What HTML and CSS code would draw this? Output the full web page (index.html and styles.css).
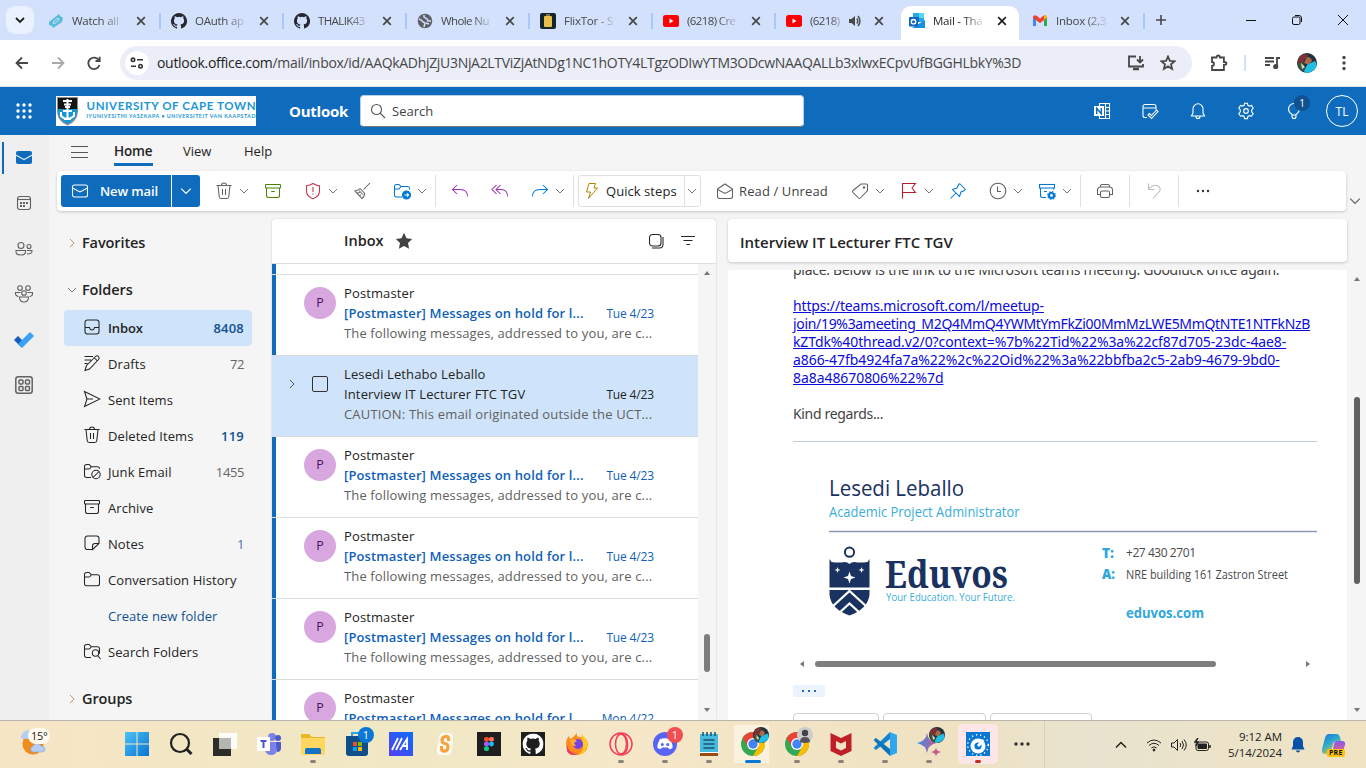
FILE: index.html
```html
<!DOCTYPE html>
<html lang="en">
<head>
<meta charset="utf-8">
<title>Mail - Outlook</title>
<link rel="stylesheet" href="styles.css">
</head>
<body>
<svg class="defs" aria-hidden="true">
  <symbol id="x" viewBox="0 0 10 10"><path d="M1.2 1.2l7.6 7.6M8.800 1.200l-7.600 7.600"/></symbol>
  <symbol id="down" viewBox="0 0 10 10"><path d="M1 3l4 4 4-4"/></symbol>
  <symbol id="right" viewBox="0 0 10 10"><path d="M3 1l4 4-4 4"/></symbol>
  <symbol id="github" viewBox="0 0 16 16"><path d="M8 0a8 8 0 0 0-2.530 15.590c.4.070.550-.170.550-.380v-1.490c-2.010.370-2.530-.490-2.690-.940-.090-.230-.480-.940-.820-1.130-.280-.150-.680-.520-.010-.530.630-.010 1.080.580 1.230.820.720 1.210 1.870.870 2.330.660.070-.520.280-.870.510-1.070-1.780-.2-3.640-.890-3.640-3.950 0-.870.310-1.590.820-2.150-.080-.2-.360-1.020.080-2.120 0 0 .670-.210 2.200.820a7.600 7.600 0 0 1 4 0c1.530-1.040 2.200-.820 2.200-.820.440 1.100.160 1.920.080 2.120.510.560.820 1.270.820 2.150 0 3.070-1.870 3.750-3.650 3.950.290.250.540.730.540 1.480v2.200c0 .210.150.460.550.380A8 8 0 0 0 8 0z"/></symbol>
  <symbol id="yt" viewBox="0 0 16 16"><rect y="2" width="16" height="12" rx="2.500" fill="#f00"/><path d="M6.500 5.500v5l4-2.500z" fill="#fff"/></symbol>
  <symbol id="mail" viewBox="0 0 18 18"><rect x="1.500" y="3" width="15" height="12" rx="2"/><path d="M1.500 6L9 10l7.500-4"/></symbol>
  <symbol id="trash" viewBox="0 0 18 18"><path d="M1.500 3.500h15M6.500 3.500a2.500 2.500 0 0 1 5 0M3 3.500l1.200 11q.2 2 2 2h5.600q1.800 0 2-2l1.200-11M7.500 7v6M10.500 7v6"/></symbol>
  <symbol id="archive" viewBox="0 0 18 18"><rect x="1.500" y="2.500" width="15" height="3.500" rx=".8"/><path d="M2.500 6v7.500a2 2 0 0 0 2 2h9a2 2 0 0 0 2-2V6M7.200 9.500h3.600"/></symbol>
  <symbol id="folder" viewBox="0 0 18 18"><path d="M1.500 13.500v-9a2 2 0 0 1 2-2h2.600l2.200 2.200h6.200a2 2 0 0 1 2 2v7a2 2 0 0 1-2 2h-11a2 2 0 0 1-2-2zM1.500 7h4.300q.8 0 1.400-.8l1.100-1.500"/></symbol>
  <symbol id="reply" viewBox="0 0 18 18"><path d="M6 3L1.500 7.500 6 12M1.500 7.500H9q7.500 0 7.500 7"/></symbol>
  <symbol id="chrome" viewBox="0 0 24 24"><circle cx="12" cy="12" r="12" fill="#34a853"/><path d="M1.600 6A12 12 0 0 1 22.400 6H12z" fill="#ea4335"/><path d="M22.400 6A12 12 0 0 1 12 24l5.200-9L12 6z" fill="#fbbc04"/><path d="M1.600 6L7 15l5-9z" fill="#ea4335"/><circle cx="12" cy="12" r="6" fill="#fff"/><circle cx="12" cy="12" r="4.700" fill="#4285f4"/></symbol>
  <symbol id="face" viewBox="0 0 20 20"><circle cx="10" cy="10" r="10" fill="#24303a"/><path d="M3 3Q7 0 11 2l-5 8-5 2Q0 7 3 3z" fill="#7b3136"/><path d="M10 4q4 0 5 4l-3 4-5-2z" fill="#a86a4c"/><path d="M1 11l5-2 2 6-2 4q-4-2-5-8z" fill="#3a5943"/><path d="M10 12l8-4q3 4 0 8-4 4-9 4-3-1-1-4z" fill="#22bfe5"/><path d="M4 10l4 4-3 2z" fill="#d9d5bc"/></symbol>
</svg>

<header class="tabs">
  <div class="tab-search"><svg class="s2" width="10" height="10"><use href="#down"/></svg></div>
  <div class="tab"><svg width="16" height="16"><path d="M1 9l10-8 1 2 3 2-1 4-9 6-1-2-3-1z" fill="#58bcd9"/><path d="M5 9l5-4 1 2-5 4z" stroke="#d3e1fd" fill="#58bcd9"/></svg><span>Watch all</span><svg class="close"><use href="#x"/></svg></div>
  <div class="tab"><svg width="16" height="16" fill="#24292f"><use href="#github"/></svg><span>OAuth ap</span><svg class="close"><use href="#x"/></svg></div>
  <div class="tab"><svg width="16" height="16" fill="#24292f"><use href="#github"/></svg><span class="tight">THALIK43</span><svg class="close"><use href="#x"/></svg></div>
  <div class="tab"><svg width="16" height="16"><circle cx="8" cy="8" r="7.300" fill="#5f6368"/><path d="M2 6q3 1 4 3l2 1-1 4M7 2v2l3 2 1 2h3M9 10l3 1" stroke="#d3e1fd" stroke-width="1.500" fill="none"/></svg><span class="tight">Whole Nu</span><svg class="close"><use href="#x"/></svg></div>
  <div class="tab"><svg width="16" height="16"><rect width="16" height="16" rx="2" fill="#14262b"/><rect x="4" y="3" width="8" height="11" rx="1" fill="#e8bf4b"/><path d="M6 2h4" stroke="#e8bf4b"/></svg><span>FlixTor - S</span><svg class="close"><use href="#x"/></svg></div>
  <div class="tab"><svg width="16" height="16"><use href="#yt"/></svg><span class="tight">(6218) Cre</span><svg class="close"><use href="#x"/></svg></div>
  <div class="tab audio"><svg width="16" height="16"><use href="#yt"/></svg><span class="tight">(6218)</span><svg width="14" height="12" fill="#474747"><path d="M1 4h2.500L7 1v10L3.500 8H1z"/><path d="M8.800 3.500q2 2.500 0 5M10 1q4 5 0 10" fill="none" stroke="#474747" stroke-width="1.400"/></svg><svg class="close"><use href="#x"/></svg></div>
  <div class="tab active"><svg width="16" height="16"><path d="M4 0h11v9H4z" fill="#28a8ea"/><path d="M10 0h5v5h-5z" fill="#50d9ff"/><path d="M4 4h6v5H4z" fill="#0364b8"/><path d="M3 15l13-8v8z" fill="#1490df"/><rect y="4" width="9" height="9.500" rx="1" fill="#0f65bd"/><circle cx="4.500" cy="8.700" r="2.200" stroke="#fff" stroke-width="1.400" fill="none"/></svg><span>Mail - Tha</span><svg class="close"><use href="#x"/></svg></div>
  <div class="tab"><svg width="16" height="16"><path d="M1 3v10h3V6z" fill="#4285f4"/><path d="M15 3v10h-3V6z" fill="#34a853"/><path d="M1 4q1-3 4-1l3 2.500L11 3q3-2 4 1v1L8 10 1 5z" fill="#ea4335"/><path d="M12 2.500q3-1 3 2L12 7z" fill="#fbbc04"/></svg><span>Inbox (2,3</span><svg class="close"><use href="#x"/></svg></div>
  <svg class="newtab" width="12" height="12" stroke="#474747" stroke-width="1.600"><path d="M6 1v10M1 6h10"/></svg>
  <div class="winbtns"><svg width="12" height="12"><path d="M1 6.500h10"/></svg><svg width="12" height="12"><rect x="1.500" y="3" width="7.500" height="7.500" rx="1.500"/><path d="M4 1.500h4q2.500 0 2.500 2.500v4"/></svg><svg width="12" height="12"><path d="M1 1l10 10M11 1L1 11"/></svg></div>
</header>

<div class="toolbar">
  <svg class="nav" width="14" height="14"><path d="M13 7H2M7 1.500L1.500 7 7 12.500"/></svg>
  <svg class="nav off" width="14" height="14"><path d="M1 7h11M7 1.500L12.500 7 7 12.500"/></svg>
  <svg class="nav" width="14" height="14"><path d="M12 4.500A5.700 5.700 0 1 0 12.500 9M12.700 .8V5H8.500"/></svg>
  <div class="omni">
    <div class="tune"><svg width="14" height="12" fill="none" stroke="#333" stroke-width="1.600"><circle cx="3" cy="2.800" r="1.700"/><path d="M7 2.800h6M1 9.200h5"/><circle cx="10.500" cy="9.200" r="1.700"/></svg></div>
    <div class="url"><b>outlook.office.com</b>/mail/inbox/id/AAQkADhjZjU3NjA2LTViZjAtNDg1NC1hOTY4LTgzODIwYTM3ODcwNAAQALLb3xlwxECpvUfBGGHLbkY%3D</div>
    <svg class="nav" width="18" height="16"><path d="M9 1.500H2v10h14V9M13 1v6M10 4.500l3 3 3-3"/><path d="M6 14h6" stroke-width="2.500"/></svg>
    <svg class="nav star" width="16" height="16"><path d="M8 1.500l1.900 4.300 4.700.4-3.600 3.100 1.100 4.600L8 11.400l-4.100 2.500L5 9.300 1.400 6.200l4.700-.4z"/></svg>
  </div>
  <svg class="nav ext" width="18" height="18"><path d="M2 3.500h4.500q0-2 1.700-2t1.700 2h4v4.500q2.500 0 2.500 1.500t-2.500 1.500v5H2v-4q2 0 2-2t-2-2z"/></svg>
  <i class="vbar"></i>
  <svg class="nav media" width="16" height="14"><path d="M1 2h9M1 5.500h9M1 9h5M13 10V2h3"/><circle cx="11.700" cy="10.500" r="1.700" fill="#474747"/></svg>
  <svg class="profile" width="20" height="20"><use href="#face"/></svg>
  <svg class="more" width="4" height="16" fill="#474747"><circle cx="2" cy="2.500" r="1.700"/><circle cx="2" cy="8" r="1.700"/><circle cx="2" cy="13.500" r="1.700"/></svg>
</div>

<div class="suite">
  <svg class="waffle" width="16" height="16" fill="#fff"><circle cx="2" cy="2" r="1.700"/><circle cx="8" cy="2" r="1.700"/><circle cx="14" cy="2" r="1.700"/><circle cx="2" cy="8" r="1.700"/><circle cx="8" cy="8" r="1.700"/><circle cx="14" cy="8" r="1.700"/><circle cx="2" cy="14" r="1.700"/><circle cx="8" cy="14" r="1.700"/><circle cx="14" cy="14" r="1.700"/></svg>
  <svg class="uct" width="200" height="30"><rect width="200" height="30" fill="#fff"/><path d="M1 1h21v15q-1 10-10.500 13.500Q2 26 1 16z" fill="#8b8f94"/><path d="M2 2h19v11H2z" fill="#151515"/><path d="M2 13h19v3q-1 8-9.500 12Q3 24 2 16z" fill="#1595d3"/><path d="M11.500 3v21M7 5h9M8 8.500h7M9 11h5M5 16v4q6 6 13 0v-4M7 15h9M8 23h7" stroke="#fff" stroke-width="2" fill="none"/><text x="30.500" y="13.800" class="uct1" textLength="169">UNIVERSITY OF CAPE TOWN</text><text x="30.500" y="22" class="uct2" textLength="169">IYUNIVESITHI YASEKAPA • UNIVERSITEIT VAN KAAPSTAD</text></svg>
  <div class="brand">Outlook</div>
  <div class="search"><svg width="16" height="16" fill="none" stroke="#555" stroke-width="1.100"><circle cx="6.500" cy="6.500" r="5"/><path d="M10 10l5 5"/></svg>Search</div>
  <div class="suite-icons">
    <svg width="18" height="18"><path d="M6.500 4V1.500h10v15h-10V14M12.500 1.500v15M12.500 5.500h4M12.500 9h4M12.500 12.500h4"/><rect x="1" y="4" width="10" height="10" fill="#fff" stroke="none"/><path d="M3.700 12V6.300L8.300 11.700V6" stroke="#0f6cbd" stroke-width="1.500"/></svg>
    <svg width="18" height="18"><path d="M6 15.500H4a2 2 0 0 1-2-2v-9a2 2 0 0 1 2-2h9a2 2 0 0 1 2 2v3M2 6h13M7 13l1.500-1.500 2 2L15.500 8 17 9.500l-6.500 7z"/></svg>
    <svg width="18" height="18"><path d="M9 1.800a5 5 0 0 0-5 5v4L2.500 14h13L14 10.800v-4a5 5 0 0 0-5-5zM7 14.500q0 2 2 2t2-2"/></svg>
    <svg width="18" height="18"><path d="M7.600 1.200h2.800l.5 2.100 1.500.8 2.100-.6 1.700 2.600-1.500 1.800v1.900l1.500 1.800-1.700 2.600-2.100-.6-1.500.8-.5 2.200H7.600l-.5-2.200-1.500-.8-2.100.6-1.700-2.600 1.500-1.800V7.900L1.800 6.100l1.700-2.600 2.100.6 1.500-.8z"/><circle cx="9" cy="8.900" r="2.300"/></svg>
    <div class="tips"><svg width="18" height="18"><path d="M7 12.500Q3.500 10 3.500 7A5.500 5.500 0 0 1 9 1.500 5.500 5.500 0 0 1 14.500 7q0 3-3.500 5.500v2q0 2-2 2t-2-2zM7 13h4"/></svg><em>1</em></div>
    <div class="me">TL</div>
  </div>
</div>

<div class="app">
  <nav class="rail">
    <div class="cell on"><svg width="18" height="16"><path d="M1 3q0-2 2-2h12q2 0 2 2v1.500L9 9 1 4.500z" fill="#0f6cbd"/><path d="M1 5.800l8 4.500 8-4.500V12q0 2-2 2H3q-2 0-2-2z" fill="#0f6cbd"/></svg></div>
    <div class="cell"><svg class="g" width="16" height="16"><rect x="1.500" y="1.500" width="13" height="13" rx="2.500"/><path d="M1.500 4.500h13"/><path d="M4 8h2M7 8h2M10 8h2M4 11h2M7 11h2" stroke-width="2"/></svg></div>
    <div class="cell"><svg class="g" width="20" height="16"><circle cx="7" cy="4.500" r="3"/><circle cx="15" cy="5.500" r="2"/><path d="M2 9.500h9.500v1.500q0 3-4.700 3T2 11zM13 9.500h5q.5 3.500-5 3.500"/></svg></div>
    <div class="cell"><svg class="g" width="20" height="20"><circle cx="6" cy="4" r="2.300"/><circle cx="14" cy="4" r="2.300"/><circle cx="10" cy="9" r="2.300"/><path d="M5.500 13h9q0 5-4.500 5t-4.500-5zM6.500 8.500h-5Q1 12 4.500 12.500M13.500 8.500h5q.5 3.500-3 4"/></svg></div>
    <div class="cell"><svg width="20" height="16"><path d="M4 4l6 6-3 5-7-7z" fill="#185abd"/><path d="M16 0l4 4L8 16l-4-4z" fill="#3aa0f2"/></svg></div>
    <div class="cell"><svg class="g bold" width="18" height="18"><rect x=".8" y=".8" width="16.400" height="16.400" rx="2.500"/><rect x="4" y="4" width="4" height="4" rx="1"/><rect x="10.500" y="4" width="4" height="4" rx="1"/><rect x="4" y="10.500" width="4" height="4" rx="1"/><rect x="10.500" y="10.500" width="4" height="4" rx="1"/></svg></div>
  </nav>

  <main class="main">
    <div class="menu">
      <svg width="18" height="14" stroke="#555"><path d="M0 1.500h17M0 7.500h17M0 12.500h17"/></svg>
      <span class="home">Home</span><span class="view">View</span><span class="help">Help</span>
    </div>
    <div class="ribbon-row">
      <div class="ribbon">
        <div class="new"><svg class="i" width="18" height="18"><use href="#mail"/></svg>New mail</div>
        <div class="new-more"><svg width="12" height="12"><use href="#down"/></svg></div>
        <svg class="i first"><use href="#trash"/></svg><svg class="ch"><use href="#down"/></svg>
        <svg class="i green"><use href="#archive"/></svg>
        <svg class="i red" viewBox="0 0 18 18"><path d="M9 1.500q3 2 6.500 2.200V9q0 5.500-6.500 7.700Q2.500 14.500 2.500 9V3.700Q6 3.500 9 1.500zM9 5v5M9 11.500v1.200"/></svg><svg class="ch"><use href="#down"/></svg>
        <svg class="i" viewBox="0 0 18 18"><path d="M17 1l-6.500 6.500M7 6.500l4.500 4.500M7 6.500q-2 2-5 2.500l7 7.500q3-2.500 2.500-5.500M6 8.500l4 4M4 11l3-.5M6 13.500l2-.5"/></svg>
        <svg class="i blue" viewBox="0 0 18 18"><path d="M9 15H3.500a2 2 0 0 1-2-2V4.500a2 2 0 0 1 2-2H6l2 2h6.500a2 2 0 0 1 2 2v1M1.500 7H6l2-2.500"/><circle cx="13.500" cy="13" r="4" fill="#0078d4"/><path d="M11.500 13h4M14 11.300l1.700 1.700-1.700 1.700" stroke="#fff"/></svg><svg class="ch"><use href="#down"/></svg>
        <i class="sep"></i>
        <svg class="i purple"><use href="#reply"/></svg>
        <svg class="i purple" viewBox="0 0 18 18"><path d="M5.500 3L1 7.500 5.500 12M9.500 3L5 7.500 9.500 12M5 7.500h5q6.500 0 6.500 7"/></svg>
        <svg class="i blue flip"><use href="#reply"/></svg><svg class="ch"><use href="#down"/></svg>
        <i class="sep"></i>
        <div class="quick"><svg width="16" height="18" viewBox="0 0 16 18"><path d="M5 1.500h6.500L10 6h3.500L4.500 16.500l2-6.500h-4z"/></svg><span>Quick steps</span><b><svg class="ch"><use href="#down"/></svg></b></div>
        <svg class="i env" viewBox="0 0 18 18"><path d="M1.500 7L9 2l7.500 5v7.500a2 2 0 0 1-2 2h-11a2 2 0 0 1-2-2zM1.500 7.500L9 11.500l7.500-4"/></svg><span class="ru">Read / Unread</span>
        <svg class="i" viewBox="0 0 18 18"><path d="M10 2h5.500a1 1 0 0 1 1 1v5.500L9.500 16q-1 1-2 0L2 10.500q-1-1 0-2z"/><circle cx="13" cy="5.500" r=".7"/></svg><svg class="ch"><use href="#down"/></svg>
        <svg class="i flag" viewBox="0 0 18 18"><path d="M2.500 16.500v-15h13L12 6l3.500 4.500h-13"/></svg><svg class="ch"><use href="#down"/></svg>
        <svg class="i blue" viewBox="0 0 18 18"><path d="M11 2l5 5q.5 1-.5 1.500L12 10l-1.500 4.500L3.500 7.500 8 6l1.500-3.500Q10 1.500 11 2zM7 11l-5.500 5.500"/></svg>
        <svg class="i" viewBox="0 0 18 18"><circle cx="9" cy="9" r="7.800"/><path d="M8.500 4.500v5H12"/></svg><svg class="ch"><use href="#down"/></svg>
        <svg class="i blue" viewBox="0 0 18 18"><rect x="1.500" y="2.500" width="15" height="3.500"/><path d="M2.500 6v7.500a2 2 0 0 0 2 2H8M15.500 6v1.500M6 9.500h3"/><circle cx="13.500" cy="13.500" r="2.500" stroke-width="2.200"/><circle cx="13.500" cy="13.500" r="3.900" stroke-dasharray="1.500 1.560"/></svg><svg class="ch"><use href="#down"/></svg>
        <i class="sep"></i>
        <svg class="i" viewBox="0 0 18 18"><path d="M4.500 5V4a1.500 1.500 0 0 1 1.500-1.500h6A1.500 1.500 0 0 1 13.500 4v1M4 12.500H1.500V8a3 3 0 0 1 3-3h9a3 3 0 0 1 3 3v4.500H14"/><rect x="4.500" y="9" width="9" height="6.500" rx="1.500"/></svg>
        <i class="sep"></i>
        <svg class="i pale" viewBox="0 0 18 18"><path d="M3.500 1.500v6h6M3.500 7q5-5 9-3.500 5 3 1 7L8 16.500"/></svg>
        <i class="sep"></i>
        <svg class="i dots" viewBox="0 0 18 18"><circle cx="4" cy="9" r="1.200"/><circle cx="9" cy="9" r="1.200"/><circle cx="14" cy="9" r="1.200"/></svg>
      </div>
      <svg class="ribbon-toggle" width="12" height="12"><use href="#down"/></svg>
    </div>

    <div class="panes">
      <aside class="folders">
        <h3><svg class="ch gold"><use href="#right"/></svg>Favorites</h3>
        <h3 class="f2"><svg class="ch"><use href="#down"/></svg>Folders</h3>
        <div class="row sel"><svg class="i" viewBox="0 0 18 18"><rect x="2" y="2" width="14" height="14" rx="2.500"/><path d="M2 9.500h4.500q.5 2.500 2.500 2.500t2.500-2.500H16"/></svg><span>Inbox</span><b>8408</b></div>
        <div class="row"><svg class="i" viewBox="0 0 18 18"><path d="M1.500 2.500H10M1.500 6H8M1.500 9.500h3M2 16.500l1.500-5 9-9q1.500-1.500 3 0t0 3l-9 9.500zM11.500 4l3 3"/></svg><span>Drafts</span><em>72</em></div>
        <div class="row"><svg class="i" viewBox="0 0 18 18"><path d="M1.500 1.500l15.500 7.500-15.500 7.500L4 9zM4 9h6"/></svg><span>Sent Items</span></div>
        <div class="row"><svg class="i"><use href="#trash"/></svg><span>Deleted Items</span><b>119</b></div>
        <div class="row"><svg class="i" viewBox="0 0 18 18"><path d="M8 15.500H3.500a2 2 0 0 1-2-2v-9a2 2 0 0 1 2-2h2.600l2.200 2.200h6.200a2 2 0 0 1 2 2M1.500 7h4.300q.8 0 1.400-.8l1.100-1.500"/><circle cx="13" cy="12.500" r="4.200"/><path d="M10 15.500l6-6"/></svg><span>Junk Email</span><em>1455</em></div>
        <div class="row"><svg class="i"><use href="#archive"/></svg><span>Archive</span></div>
        <div class="row"><svg class="i" viewBox="0 0 18 18"><path d="M9.500 15.500h-5a2.500 2.500 0 0 1-2.500-2.500V4.500A2.500 2.500 0 0 1 4.500 2h9A2.500 2.500 0 0 1 16 4.500v5l-6.500 6v-3.500q0-2.500 2.500-2.500h4"/></svg><span>Notes</span><em class="bl">1</em></div>
        <div class="row"><svg class="i"><use href="#folder"/></svg><span>Conversation History</span></div>
        <div class="row"><svg class="i"></svg><span class="create">Create new folder</span></div>
        <div class="row"><svg class="i" viewBox="0 0 18 18"><path d="M8 15.500H3.500a2 2 0 0 1-2-2v-9a2 2 0 0 1 2-2h2.600l2.200 2.200h6.200a2 2 0 0 1 2 2v5M1.500 7h4.300q.8 0 1.400-.8l1.100-1.500M14.500 13.500l3 3.500"/><circle cx="12.500" cy="11" r="3.200"/></svg><span>Search Folders</span></div>
        <h3 class="f3"><svg class="ch gold"><use href="#right"/></svg>Groups</h3>
      </aside>

      <section class="list">
        <div class="list-head"><span>Inbox</span><svg width="18" height="18"><path d="M9 .8l2.500 5.400 5.700.7-4.200 4 1.100 5.800L9 13.900l-5.100 2.800L5 10.900l-4.200-4 5.700-.7z" fill="#424242"/></svg>
          <svg class="i sm" viewBox="0 0 18 18"><rect x="2.500" y="2.500" width="11.500" height="11.500" rx="3"/><path d="M5 16h7.500q3.500 0 3.500-3.500V5"/></svg><svg class="i fl" viewBox="0 0 18 18"><path d="M2 4.500h14M4.500 8.500h9M7.500 12.500h3.500"/></svg></div>
        <div class="list-body">
          <div class="msgs">
            <div class="stub"></div>
            <article><div class="av">P</div><div class="t"><h4>Postmaster</h4><p class="s"><span>[Postmaster] Messages on hold for l...</span><time>Tue 4/23</time></p><p class="p">The following messages, addressed to you, are c...</p></div></article>
            <article class="read"><svg class="ch"><use href="#right"/></svg><div class="box"></div><div class="t"><h4>Lesedi Lethabo Leballo</h4><p class="s"><span>Interview IT Lecturer FTC TGV</span><time>Tue 4/23</time></p><p class="p">CAUTION: This email originated outside the UCT...</p></div></article>
            <article><div class="av">P</div><div class="t"><h4>Postmaster</h4><p class="s"><span>[Postmaster] Messages on hold for l...</span><time>Tue 4/23</time></p><p class="p">The following messages, addressed to you, are c...</p></div></article>
            <article><div class="av">P</div><div class="t"><h4>Postmaster</h4><p class="s"><span>[Postmaster] Messages on hold for l...</span><time>Tue 4/23</time></p><p class="p">The following messages, addressed to you, are c...</p></div></article>
            <article><div class="av">P</div><div class="t"><h4>Postmaster</h4><p class="s"><span>[Postmaster] Messages on hold for l...</span><time>Tue 4/23</time></p><p class="p">The following messages, addressed to you, are c...</p></div></article>
            <article><div class="av">P</div><div class="t"><h4>Postmaster</h4><p class="s"><span>[Postmaster] Messages on hold for l...</span><time>Mon 4/22</time></p></div></article>
          </div>
          <div class="sb"><i class="up"></i><i class="thumb"></i><i class="dn"></i></div>
        </div>
      </section>

      <section class="read-pane">
        <div class="subject">Interview IT Lecturer FTC TGV</div>
        <div class="read-body">
          <div class="paper">
            <p class="cut">place. Below is the link to the Microsoft teams meeting. Goodluck once again.</p>
            <p class="link"><a class="l1">https://teams.microsoft.com/l/meetup-</a><br><a class="l2">join/19%3ameeting_M2Q4MmQ4YWMtYmFkZi00MmMzLWE5MmQtNTE1NTFkNzB</a><br><a class="l3">kZTdk%40thread.v2/0?context=%7b%22Tid%22%3a%22cf87d705-23dc-4ae8-</a><br><a class="l4">a866-47fb4924fa7a%22%2c%22Oid%22%3a%22bbfba2c5-2ab9-4679-9bd0-</a><br><a class="l5">8a8a48670806%22%7d</a></p>
            <p class="kind">Kind regards...</p>
            <hr>
            <svg class="sig" width="488" height="170">
              <text x="0" y="26" class="n1" textLength="135" lengthAdjust="spacingAndGlyphs">Lesedi Leballo</text>
              <text x="0" y="47" class="n2" textLength="190.500" lengthAdjust="spacingAndGlyphs">Academic Project Administrator</text>
              <path d="M0 61.500h488" stroke="#8a9bb8" stroke-width="1.500"/>
              <path d="M.5 89l2 3q8 1 13 0 3 0 5 2 2-2 5-2 5 1 13 0l2-3v28.500H.5zM.5 120h40v5q-2 14-20 20.500Q2 139 .5 125z" fill="#1a325f"/>
              <circle cx="20.500" cy="82.200" r="4.600" fill="none" stroke="#1a325f" stroke-width="2"/>
              <path d="M20.500 101.500l1.500 4.500 4.500 1.500-4.500 1.500-1.500 4.500-1.500-4.500-4.500-1.500 4.500-1.500zM8.500 97l.8 2.200 2.200.8-2.200.8-.8 2.200-.8-2.200-2.200-.8 2.200-.8zM32.500 97l.8 2.200 2.200.8-2.200.8-.8 2.200-.8-2.200-2.200-.8 2.200-.8z" fill="#fff"/>
              <path d="M3 137l17.500-16L38 137M9 144l11.500-10.500L32 144" fill="none" stroke="#fff" stroke-width="2.300"/>
              <text x="56" y="118" class="ed" textLength="123" lengthAdjust="spacingAndGlyphs">Eduvos</text>
              <text x="57" y="131" class="tag" textLength="129" lengthAdjust="spacingAndGlyphs">Your Education. Your Future.</text>
              <text x="273" y="87.500" class="k" textLength="12" lengthAdjust="spacingAndGlyphs">T:</text><text x="297" y="87" class="v" textLength="70">+27 430 2701</text>
              <text x="273" y="109" class="k" textLength="13" lengthAdjust="spacingAndGlyphs">A:</text><text x="297" y="109" class="v" textLength="162" lengthAdjust="spacingAndGlyphs">NRE building 161 Zastron Street</text>
              <text x="297" y="148" class="w" textLength="78" lengthAdjust="spacingAndGlyphs">eduvos.com</text>
            </svg>
            <div class="hs"><i class="lf"></i><i class="bar"></i><i class="rt"></i></div>
            <div class="trim"><i></i><i></i><i></i></div>
            <div class="acts"><i></i><i></i><i></i></div>
          </div>
          <div class="sb"><i class="up"></i><i class="thumb"></i><i class="dn"></i></div>
        </div>
      </section>
    </div>
  </main>
</div>

<footer class="task">
  <div class="weather"><svg width="34" height="34"><circle cx="13" cy="17" r="10.500" fill="#f08c1e"/><path d="M2 12a4 4 0 0 1 1-6 5 5 0 0 1 9 0q4 0 4 3t-4 3z" fill="#b5cdf0"/><path d="M12 25a3.500 3.500 0 0 1 1-6 4.500 4.500 0 0 1 8 0q4 0 4 3t-3 3z" fill="#b5cdf0" stroke="#89a5d8" stroke-width=".6"/></svg><span>15°</span></div>
  <div class="apps">
    <div><svg width="24" height="24"><defs><linearGradient id="w" x2="1" y2="1"><stop stop-color="#4cc2f5"/><stop offset="1" stop-color="#0873d3"/></linearGradient></defs><path d="M0 0h11.500v11.500H0zM12.500 0H24v11.500H12.500zM0 12.500h11.500V24H0zM12.500 12.500H24V24H12.500z" fill="url(#w)"/></svg></div>
    <div><svg width="24" height="24" fill="none" stroke="#222"><circle cx="11" cy="11" r="9" stroke-width="2.200"/><path d="M17.500 17l5 5" stroke-width="3"/></svg></div>
    <div><svg width="26" height="24"><path d="M1 6h18v18H1z" fill="#2c2c2a"/><path d="M7 1h18v16H7z" fill="#fff" opacity=".85"/><path d="M7 6h12v11H7z" fill="#b5b5b2"/></svg></div>
    <div><svg width="26" height="24"><circle cx="16" cy="5" r="4" fill="#7b83eb"/><circle cx="22" cy="6" r="3" fill="#5059c9"/><path d="M10 10h11v7q0 6-6 6-5 0-6-5z" fill="#7b83eb"/><path d="M20 10h5v6q0 4-4 4z" fill="#5059c9"/><path d="M1 5h13v14H1z" fill="#fff"/><path d="M4.500 9h6M7.500 9v7" stroke="#4b53bc" stroke-width="2"/></svg></div>
    <div class="run"><svg width="24" height="24"><path d="M0 2h8l3 3h13v17H0z" fill="#f0b429"/><path d="M0 6h24v15q0 2-2 2H2q-2 0-2-2z" fill="#ffd660"/><path d="M4 22v-4q0-2 2-2h12q2 0 2 2v4z" fill="#1473c8"/></svg></div>
    <div><svg width="24" height="24"><path d="M7 5V1h10v4" fill="none" stroke="#2aa5e8" stroke-width="2"/><path d="M1 4h22v17q0 3-3 3H4q-3 0-3-3z" fill="#114f88"/><path d="M8 10h4v4H8z" fill="#f25022"/><path d="M13 10h4v4h-4z" fill="#7fba00"/><path d="M8 15h4v4H8z" fill="#00a4ef"/><path d="M13 15h4v4h-4z" fill="#ffb900"/></svg><em class="badge b">1</em></div>
    <div><svg width="24" height="24"><defs><linearGradient id="m" x1="1" x2="0" y2="1"><stop stop-color="#0a6cff"/><stop offset="1" stop-color="#5640ee"/></linearGradient></defs><path d="M0 0h24v24H0z" fill="url(#m)"/><path d="M3 18L9 6M7 18l6-12M11 18l7-11v11M14 14h5" stroke="#fff" stroke-width="1.800" fill="none"/></svg></div>
    <div><svg width="18" height="24"><path d="M6 1h8q3 1 3 6l-1 11q-1 5-5 5H4q-4-1-3-6L3 5q1-3 3-4z" fill="#fffaf2"/><path d="M12.500 9V6.500Q12 4 9.500 4.500 6 5 6 8.500q0 2.500 3 3 3 .5 3 3.500-.5 4-3.500 4.200-3 0-3-2.700V14" fill="none" stroke="#f7a440" stroke-width="3.200"/></svg></div>
    <div><svg width="24" height="24"><path d="M0 0h24v24H0z" fill="#1e1e1e"/><rect x="7" y="5" width="5" height="4.600" rx="2" fill="#f24e1e"/><rect x="12" y="5" width="5" height="4.600" rx="2" fill="#ff7262"/><rect x="7" y="9.600" width="5" height="4.600" rx="2" fill="#a259ff"/><circle cx="14.500" cy="12" r="2.400" fill="#1abcfe"/><rect x="7" y="14.300" width="5" height="4.700" rx="2" fill="#0acf83"/></svg></div>
    <div><svg width="24" height="24"><path d="M0 0h24v24H0z" fill="#1e1e1e"/><use href="#github" x="1.500" y="1.500" width="21" height="21" fill="#fff"/></svg></div>
    <div><svg width="24" height="24"><path d="M12 1q-1 3 2 4 8 0 9 7-1 11-11 11Q1 23 1 12q0-5 3-8l1 3q4-2 7-6z" fill="#ff8a1e"/><path d="M16 2q6 4 6.500 10-1 10-10 11 8-4 5-13z" fill="#ffca28"/><path d="M2 13q2 9 11 9-8 3-11-3z" fill="#f0385e"/><circle cx="13" cy="12" r="5" fill="#7542e5"/><path d="M5 8q4-2 7 1l-3 2 2 3q-6 0-6-6z" fill="#ffad32"/></svg></div>
    <div class="run"><svg width="24" height="24" fill="none" stroke="#f43e5c" stroke-width="1.500"><circle cx="12" cy="12" r="11"/><ellipse cx="12" cy="12" rx="5.500" ry="10"/><path d="M10 2q8-1 8.500 10T10 22"/></svg></div>
    <div class="run"><svg width="24" height="24"><circle cx="12" cy="12" r="12" fill="#5865f2"/><path d="M7 7q5-1.500 10 0 3 5 2.500 9-2 1.500-3.500 1l-1-1.500H9L8 17q-2 0-3.500-1Q4 12 7 7z" fill="#fff"/><circle cx="9.300" cy="12.500" r="1.500" fill="#5865f2"/><circle cx="14.700" cy="12.500" r="1.500" fill="#5865f2"/></svg><em class="badge r">1</em></div>
    <div class="run"><svg width="20" height="24"><path d="M1 2h18v18H1z" fill="#46b9df"/><path d="M1 21h18v3H1z" fill="#9a4c13"/><path d="M1 20.500h18" stroke="#fff"/><path d="M4 0v4M8 0v4M12 0v4M16 0v4M4.500 8h11M4.500 12h11M4.500 16h11" stroke="#14536d" stroke-width="1.500"/></svg></div>
    <div class="run cur"><svg width="24" height="24"><use href="#chrome"/></svg><svg class="mini" width="16" height="16"><use href="#face"/></svg></div>
    <div class="run"><svg width="24" height="24"><use href="#chrome"/></svg><svg class="mini" width="16" height="16"><circle cx="8" cy="8" r="8" fill="#ccc"/><path d="M3 15q0-5 5-5t5 5q-5 2-10 0z" fill="#555"/><circle cx="8" cy="6" r="3.200" fill="#444"/></svg></div>
    <div class="run"><svg width="24" height="24"><path d="M1.500 1l10.500 5L22.500 1v18L12 24 1.500 19zM7 9v7l5 2.500 5-2.500V9l-5 2.500z" fill="#bf2026" fill-rule="evenodd"/></svg></div>
    <div class="run"><svg width="24" height="24"><path d="M17 0l7 3v18l-7 3z" fill="#2ea7ee"/><path d="M17 0v7L3 18l-2.500-2z" fill="#1384cd"/><path d="M17 24v-7L3 6 .5 8z" fill="#0c74ba"/></svg></div>
    <div class="run"><svg width="26" height="26"><defs><linearGradient id="c"><stop stop-color="#318ced"/><stop offset="1" stop-color="#ec4f79"/></linearGradient></defs><path d="M11 2q1 8 9 10-8 2-9 10-1-8-10-10 9-2 10-10zM20 16q0 4 5 5-5 1-5 5 0-4-5-5 5-1 5-5z" fill="url(#c)"/></svg><svg class="mini" width="16" height="16"><use href="#face"/></svg></div>
  </div>
  <div class="pinned"><svg width="24" height="24"><path d="M0 0h24v24H0z" fill="#0878d4"/><circle cx="12" cy="14" r="7.500" fill="#fff"/><circle cx="12" cy="14" r="3.600" fill="#0878d4"/><path d="M12 14l5.500-6" stroke="#fff" stroke-width="2.600"/><circle cx="12" cy="13" r="10.300" fill="none" stroke="#fff" stroke-width="1.500" stroke-dasharray="1.200 3"/></svg></div>
  <svg class="tdots" width="18" height="6" fill="#333"><circle cx="3" cy="3" r="1.700"/><circle cx="9" cy="3" r="1.700"/><circle cx="15" cy="3" r="1.700"/></svg>
  <div class="tray">
    <svg width="12" height="8"><path d="M1 6.500L6 1.500l5 5" stroke-width="1.500"/></svg>
    <svg class="wf" width="16" height="14"><path d="M1 5q7-6 14 0M3 7.500q5-4.500 10 0M5.300 10q2.700-2.500 5.400 0"/><circle cx="8" cy="12" r="1" fill="#222"/></svg>
    <svg class="vo" width="18" height="14"><path d="M1.500 5H4l3.500-3.500v11L4 9H1.500zM10 5q1.500 2 0 4M12 3q3 4 0 8M14 1.500q4.500 5.500 0 11"/></svg>
    <svg class="ba" width="17" height="14"><rect x="2" y="4" width="12.500" height="8.500" rx="2"/><path d="M4 6h8.500v4.500H4z" fill="#222"/><path d="M16 7v3M4 0L1 4h3L2 8" stroke-width="1.500"/></svg>
    <div class="clock">9:12 AM<br>5/14/2024</div>
    <svg class="be" width="14" height="16"><path d="M7 0a5 5 0 0 0-5 5v4L.5 12.500h13L12 9V5a5 5 0 0 0-5-5zM4.800 13.500h4.400Q8.500 15.500 7 15.500t-2.200-2z" fill="#0a4fa8" stroke="none"/></svg>
    <div class="pre"><svg width="24" height="22"><defs><linearGradient id="p" x2=".6" y2="1"><stop stop-color="#1a6fd8"/><stop offset=".5" stop-color="#2fa9d0"/><stop offset="1" stop-color="#d8c83c"/></linearGradient><linearGradient id="q" x2="0" y2="1"><stop stop-color="#8a5bea"/><stop offset="1" stop-color="#f0617a"/></linearGradient></defs><path d="M7 0h8q2 0 3 3l1 4h-5q-2 0-3 3l-2 8q-1 2-3 2H3q-4 0-3-5L3 4q1-4 4-4z" fill="url(#p)" stroke="none"/><path d="M14 7h7q3 1 2 4l-3 9H10l2-10q.5-3 2-3z" fill="url(#q)" stroke="none"/></svg><em>PRE</em></div>
  </div>
</footer>
</body>
</html>
```
FILE: styles.css
```css
* { box-sizing: border-box; }
body { margin: 0; width: 1366px; height: 768px; overflow: hidden; display: flex; flex-direction: column; font: 13px/20px "Open Sans", "Noto Sans", sans-serif; color: #242424; background: #f5f5f5; }
h3, h4, p { margin: 0; font-weight: 400; }
em { font-style: normal; }
svg { flex: none; display: block; }
.defs { width: 0; height: 0; position: absolute; }

/* browser tabs */
.tabs { height: 40px; flex: none; background: #d3e1fd; display: flex; align-items: center; padding-left: 6px; font-size: 11.500px; }
.tab-search { width: 28px; height: 28px; border-radius: 9px; background: #eaf1ff; display: grid; place-items: center; margin-right: 4px; }
.s2 { fill: none; stroke: #1f1f1f; stroke-width: 1.800; }
.tab { width: 123px; height: 34px; padding-left: 10px; display: flex; align-items: center; position: relative; color: #474747; flex: none; margin-top: 1px; }
.tab span { width: 51px; margin: 0 0 0 8px; letter-spacing: -0.25px; white-space: nowrap; -webkit-mask-image: linear-gradient(90deg, #000 60%, #0002 98%); }
.tab span.tight { letter-spacing: -0.600px; }
.tab .close { width: 10px; height: 10px; margin-left: auto; margin-right: 15px; stroke: #474747; stroke-width: 1.700; }
.tab::after { content: ""; position: absolute; right: 0; top: 9px; width: 2px; height: 16px; background: #a8c7fa; }
.tab.audio span { width: 34px; margin-right: 4px; }
.tab.audio::after, .tab.active::after { display: none; }
.tab.active { background: #fff; height: 34px; border-radius: 10px 10px 0 0; width: 118px; margin: 6px 3px 0 2px; padding: 0 0 5px 8px; color: #1f1f1f; }
.tab.active .close { margin-right: 12px; stroke: #1f1f1f; }
.newtab { margin-left: 10px; }
.winbtns { margin-left: auto; display: flex; gap: 34px; padding-right: 17px; fill: none; stroke: #111; }

.toolbar { height: 47px; flex: none; background: #fff; display: flex; align-items: center; padding: 0 0 1px 15px; border-bottom: 1px solid #dde1e8; }
.nav { fill: none; stroke: #474747; stroke-width: 1.800; margin-right: 22px; }
.nav.off { stroke: #a9a9a9; }
.omni { width: 1072px; height: 34px; border-radius: 17px; background: #ebeef8; margin-left: -3px; display: flex; align-items: center; padding-left: 5px; }
.tune { width: 24px; height: 24px; border-radius: 50%; background: #fff; display: grid; place-items: center; }
.url { margin-left: 8px; width: 970px; font-size: 14px; letter-spacing: -0.315px; color: #474747; white-space: nowrap; }
.url b { font-weight: 400; color: #1f1f1f; }
.omni .nav { margin-right: 15px; }
.omni .star { margin-right: 0; }
.nav.ext { margin: 0 0 0 18px; }
.vbar { width: 2px; height: 16px; background: #d3e1fd; margin: 0 18px 0 16px; }
.nav.media { margin-right: 17px; }
.more { margin-left: 25px; }

/* suite header */
.suite { height: 48px; flex: none; background: #0f6cbd; display: flex; align-items: center; padding-left: 16px; color: #fff; }
.uct { margin-left: 24px; }
.uct1 { font: 700 11.500px Lato, sans-serif; fill: #1b96d4; }
.uct2 { font: 700 5.300px Lato, sans-serif; fill: #1b96d4; }
.brand { margin-left: 33px; width: 71px; font-size: 15px; font-weight: 700; letter-spacing: -0.25px; }
.search { width: 444px; height: 32px; background: #fff; border-radius: 4px; border: 1px solid #b8cfe6; border-bottom-color: #777; color: #424242; display: flex; align-items: center; gap: 6px; padding-left: 9px; }
.suite-icons { margin-left: auto; display: flex; align-items: center; padding-right: 8px; }
.suite-icons svg { fill: none; stroke: #fff; stroke-width: 1.100; margin-right: 30px; }
.tips { position: relative; }
.suite-icons .tips svg { margin-right: 23px; }
.tips em { position: absolute; left: 9px; top: -7px; width: 16px; height: 16px; border-radius: 50%; background: #115190; font-size: 10px; line-height: 16px; text-align: center; }
.me { width: 32px; height: 32px; border: 1px solid #fff; border-radius: 50%; text-align: center; line-height: 32px; font-size: 12px; }

.app { flex: none; height: 585px; display: flex; }
.rail { width: 49px; background: #efefef; }
.cell { height: 45.500px; display: grid; place-items: center; padding-right: 1px; }
.cell.on { background: linear-gradient(#0f6cbd, #0f6cbd) 2px 7px / 2px 32px no-repeat; }
.g { fill: none; stroke: #616161; stroke-width: 1.100; }
.g.bold { stroke-width: 1.500; }
.main { width: 1317px; }
.menu { height: 36px; display: flex; padding-left: 22px; }
.menu svg { margin: 10px 25px 0 0; }
.menu span { line-height: 24px; height: 27px; margin-top: 4px; font-size: 13px; }
.menu .home { font-weight: 600; font-size: 13.500px; width: 39px; letter-spacing: -0.15px; background: linear-gradient(#0f6cbd, #0f6cbd) 0 100% / 39px 3px no-repeat; white-space: nowrap; }
.view { margin-left: 30px; width: 61px; }
.ribbon-row { display: flex; padding-left: 8px; }
.ribbon { width: 1289px; height: 40px; background: #fff; border-radius: 4px; box-shadow: 0 1px 3px #0003; display: flex; align-items: center; padding-left: 4px; flex: none; }
.ribbon-toggle { margin: 24px 0 0 3px; fill: none; stroke: #616161; }
.new { width: 110px; height: 32px; background: #0f6cbd; color: #fff; border-radius: 3px 0 0 3px; font-weight: 600; display: flex; align-items: center; padding-left: 10px; gap: 11px; white-space: nowrap; letter-spacing: -0.100px; }
.new .i { margin: 0; color: #fff; }
.new-more { width: 28px; height: 32px; margin-left: 1px; background: #0f6cbd; border-radius: 0 3px 3px 0; display: grid; place-items: center; fill: none; stroke: #fff; }
.i { width: 18px; height: 18px; fill: none; stroke: currentColor; stroke-width: 1.050; color: #616161; margin-left: 22px; }
.ch { width: 10px; height: 10px; fill: none; stroke: #757575; stroke-width: 1; margin-left: 6px; }
.ch + .i, .i.first, .i.env { margin-left: 15px; }
.sep + .i { margin-left: 0; }
.sep { width: 1px; height: 32px; background: #e0e0e0; margin: 0 15px; }
.ch + .sep { margin-left: 8px; }
.green { color: #498205; } .red { color: #c4314b; } .blue { color: #0078d4; } .purple { color: #9b2fae; } .flag { color: #b3202c; } .pale { color: #bdbdbd; }
.dots { fill: #333; stroke: none; }
.flip { transform: scaleX(-1); }
.quick { width: 123px; height: 32px; border: 1px solid #e0e0e0; border-radius: 3px; margin-left: -11px; display: flex; align-items: center; padding-left: 5px; fill: none; stroke: #b38600; }
.quick span { margin-left: 6px; width: 73px; letter-spacing: 0.05px; white-space: nowrap; }
.quick b { border-left: 1px solid #e0e0e0; height: 30px; display: grid; place-items: center; margin-left: 5px; }
.quick .ch { margin-left: 2px; }
.ru { margin-left: 5px; width: 90px; white-space: nowrap; color: #424242; letter-spacing: .12px; }

.panes { display: flex; padding: 8px 0 0 15px; height: 509px; }
.folders { width: 188px; margin-right: 20px; }
.folders h3 { height: 48px; display: flex; align-items: center; gap: 5px; font-size: 14.500px; font-weight: 600; letter-spacing: -0.1px; padding-left: 3px; }
.folders h3 .ch { margin-left: 0; }
.folders h3.f2 { height: 43px; padding-top: 2px; }
.folders h3.f3 { height: 58px; }
.gold { stroke: #c49a6c; }
.row { height: 36px; display: flex; align-items: center; padding: 0 8px 0 19px; border-radius: 4px; letter-spacing: .08px; }
.row .i { margin: -2px 7px 0 0; color: #242424; }
.row b, .row em { margin-left: auto; font-weight: 600; color: #115190; letter-spacing: 0.2px; }
.row em { font-weight: 400; color: #666; letter-spacing: -0.4px; }
.row em.bl { color: #4f6bbf; }
.row.sel { background: #cfe4fa; }
.row.sel span { font-weight: 600; letter-spacing: -0.1px; }
.create { color: #115190; }

.list { width: 444px; background: #fff; border-radius: 4px 4px 0 0; box-shadow: 0 0 2px #0003; display: flex; flex-direction: column; margin-right: 12px; }
.list-head { height: 45px; flex: none; border-bottom: 1px solid #e0e0e0; display: flex; align-items: center; padding-left: 72px; font-size: 14.500px; font-weight: 600; }
.list-head span { width: 51px; letter-spacing: 0; }
.list-head .i { color: #242424; }
.list-head .sm { margin-left: 234px; }
.list-head .fl { margin-left: 14px; }
.list-body { display: flex; height: 456px; overflow: hidden; }
.msgs { width: 426px; }
.stub { height: 10px; border-left: 4px solid #0f6cbd; }
article { height: 81px; border-top: 1px solid #dcdcdc; display: flex; position: relative; padding-left: 32px; }
article::before { content: ""; position: absolute; left: 0; top: 0; bottom: 0; width: 4px; background: #0f6cbd; }
.av { width: 32px; height: 32px; border-radius: 50%; background: #d9a7e0; color: #4a1259; text-align: center; line-height: 32px; font-weight: 500; font-size: 12.500px; margin: 12px 8px 0 0; }
.t { padding-top: 8px; width: 310px; white-space: nowrap; }
.t h4 { font-weight: 500; letter-spacing: .12px; }
.s { display: flex; justify-content: space-between; color: #0f5fb8; font-weight: 600; letter-spacing: 0.13px; }
.s time { font-weight: 500; font-size: 12px; letter-spacing: -0.15px; padding-top: 1px; height: 20px; }
.p { color: #616161; letter-spacing: .13px; }
.read { background: #cfe4fa; padding-left: 15px; }
.read::before { display: none; }
.read .ch { margin: 23px 7px 0 0; stroke: #555; }
.box { width: 16px; height: 16px; border: 1px solid #333; border-radius: 2px; margin: 20px 16px 0 8px; }
.read h4, .read .s, .read time { font-weight: 400; color: #242424; }
.read .p { letter-spacing: .17px; }
.sb { width: 18px; background: #f5f5f5; display: flex; flex-direction: column; align-items: center; }
.up, .dn { border: 3px solid transparent; border-top: 0; border-bottom: 4px solid #777; width: 0; margin-top: 7px; }
.dn { border-top: 4px solid #777; border-bottom: 0; }
.thumb { width: 6px; height: 38px; border-radius: 3px; background: #7d7d7d; margin-top: 359px; }
.sb .dn { margin-top: 36px; }

.read-pane { width: 638px; display: flex; flex-direction: column; }
.subject { width: 619px; height: 43px; flex: none; background: #fff; border-radius: 4px; box-shadow: 0 1px 3px #0003; padding-left: 12px; font-size: 15px; font-weight: 600; line-height: 47px; letter-spacing: 0; font-stretch: 96%; white-space: nowrap; }
.read-body { margin-top: 8px; height: 450px; display: flex; overflow: hidden; }
.paper { width: 619px; background: #fff; padding: 0 30px 0 65px; font: 14px/18px "Noto Sans", sans-serif; color: #424242; box-shadow: 0 0 2px #0003; white-space: nowrap; flex: none; }
.cut { margin-top: -9px; letter-spacing: -0.28px; }
.link { margin-top: 18px; color: #0b0bdc; text-decoration: underline; }
.l1 { letter-spacing: -0.16px; }
.l2 { letter-spacing: -0.32px; }
.l3 { letter-spacing: -0.11px; }
.l4, .l5 { letter-spacing: -0.07px; }
.kind { margin-top: 18px; letter-spacing: -0.33px; }
.paper hr { border: 0; border-top: 1px solid #c3cdd6; margin: 18px 0 28px; }
.sig { margin-left: 36px; font-family: "Open Sans", sans-serif; }
.n1 { font-size: 21.500px; fill: #1a325f; } .n2 { font-size: 14px; fill: #3badd9; }
.ed { font: 700 38px "Noto Serif", "Liberation Serif", serif; fill: #1a325f; }
.tag { font-size: 10px; fill: #3badd9; }
.k, .w { font-size: 13.500px; font-weight: 800; fill: #2ea7dd; }
.w { font-weight: 700; font-size: 14px; }
.v { font-size: 12px; fill: #4a4a4a; }
.hs { display: flex; align-items: center; height: 16px; margin-top: 16px; padding-left: 7px; }
.lf, .rt { border: 3px solid transparent; border-left: 0; border-right: 4px solid #777; }
.rt { border-right: 0; border-left: 4px solid #777; margin-left: 90px; }
.bar { width: 401px; height: 6px; border-radius: 3px; background: #7f7f7f; margin-left: 11px; }
.trim { width: 32px; height: 12px; border-radius: 2px; background: #ebf3fc; margin-top: 13px; display: flex; gap: 4px; align-items: center; justify-content: center; }
.trim i { width: 2px; height: 2px; background: #2b6cb0; }
.acts { display: flex; gap: 4px; margin-top: 16px; }
.acts i { height: 30px; width: 86px; border: 1px solid #d1d1d1; border-radius: 4px; }
.acts i + i { width: 103px; }
.acts i + i + i { width: 102px; }
.read-pane .sb { padding-left: 1px; width: 19px; }
.read-pane .sb .thumb { margin-top: 116px; height: 187px; background: #606060; width: 6px; }
.read-pane .sb .dn { margin-top: 124px; }

/* taskbar */
.task { height: 48px; flex: none; position: relative; background: linear-gradient(90deg, #f6e5c5, #f0e8c4 30%, #f5e7c8 45%, #efe2c3 70%, #e8e3cf 80%, #f0e3c3); box-shadow: inset 0 1px 0 #b9b5ad; display: flex; align-items: center; padding-left: 20px; }
.weather { width: 95px; display: flex; }
.weather span { margin: 0 0 0 -26px; height: 16px; font-size: 11px; line-height: 16px; padding: 0 3px; border-radius: 8px; background: #fffaf0; position: relative; top: 1px; z-index: 1; letter-spacing: -0.300px; }
.apps { display: flex; }
.apps div, .pinned { width: 44px; height: 48px; display: grid; place-items: center; position: relative; }
.apps .run::after, .pinned::after { content: ""; position: absolute; bottom: 5px; left: 19px; width: 6px; height: 3px; border-radius: 2px; background: #8a8475; }
.cur { background: linear-gradient(#faf1de, #faf1de) 3px 5px / 35px 38px no-repeat; }
.apps .cur::after { left: 14px; width: 16px; background: #0878d4; }
.mini { position: absolute; left: 22px; top: 7px; }
.badge { position: absolute; left: 23px; top: 7px; width: 16px; height: 16px; border-radius: 50%; color: #fff; font-size: 11px; line-height: 16px; text-align: center; }
.b { background: #0a78d4; } .badge.r { background: #f04e50; left: 24px; }
.pinned { width: 40px; height: 40px; margin-left: 7px; background: #fde5e8; border-radius: 5px; }
.pinned::after { left: 17px; bottom: 1px; background: #c42b1c; }
.tdots { margin-left: 15px; }
.tray { margin-left: auto; display: flex; align-items: center; fill: none; stroke: #222; height: 47px; margin-top: 1px; border-left: 1px solid #d9d2bb; padding-left: 70px; padding-right: 20px; }
.wf { margin-left: 19px; } .vo { margin-left: 8px; } .ba { margin-left: 6px; }
.clock { width: 71px; font-size: 11.500px; line-height: 16px; text-align: right; letter-spacing: -0.05px; white-space: nowrap; color: #222; }
.be { margin: 0 0 0 9px; }
.pre { position: relative; margin-left: 17px; }
.pre em { position: absolute; left: 5px; top: 15px; background: #ffc20e; border-radius: 2px; font: 700 7px/8px "Open Sans"; padding: 0 2px; color: #111; letter-spacing: .2px; }
```
